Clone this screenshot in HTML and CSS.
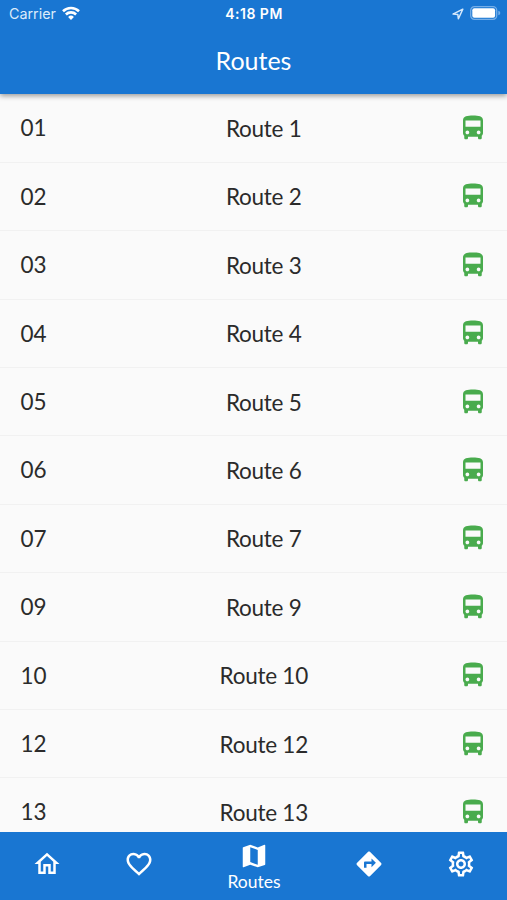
FILE: index.html
```html
<!DOCTYPE html>
<html lang="en">
<head>
<meta charset="utf-8">
<title>Routes</title>
<link rel="stylesheet" href="styles.css">
</head>
<body>
<svg class="defs" aria-hidden="true">
  <symbol id="bus" viewBox="0 0 24 24"><path d="M4 16c0 .88.39 1.67 1 2.22V20c0 .55.45 1 1 1h1c.55 0 1-.45 1-1v-1h8v1c0 .55.45 1 1 1h1c.55 0 1-.45 1-1v-1.780c.61-.55 1-1.340 1-2.220V6c0-3.500-3.580-4-8-4s-8 .5-8 4v10zm3.500 1c-.83 0-1.500-.67-1.500-1.500S6.670 14 7.500 14s1.500.67 1.500 1.500S8.330 17 7.500 17zm9 0c-.83 0-1.500-.67-1.500-1.500s.67-1.500 1.500-1.500 1.500.67 1.500 1.500-.67 1.500-1.500 1.500zm1.500-6H6V6h12v5z"/></symbol>
</svg>
<div class="app">
  <header class="top">
    <div class="status">
      <div class="carrier"><span>Carrier</span>
        <svg class="wifi" viewBox="0 0 18 14"><g fill="none" stroke="#fff" stroke-width="2.600"><path d="M1 5.200a11.500 11.500 0 0 1 16 0"/><path d="M3.900 8.500a7.300 7.300 0 0 1 10.200 0"/></g><path fill="#fff" d="M6.100 10.900a4.100 4.100 0 0 1 5.800 0L9 13.900z"/></svg>
      </div>
      <div class="clock">4:18 PM</div>
      <div class="power">
        <svg class="arrow" viewBox="0 0 12 12"><path d="M1 6.100L10.800 1.200 6.400 10.800 5.800 6.400z" fill="none" stroke="#d5e8fb" stroke-width="1.500" stroke-linejoin="round"/></svg>
        <svg class="battery" viewBox="0 0 31 14"><rect x=".7" y=".7" width="26" height="12.600" rx="3.700" fill="none" stroke="#75aee8" stroke-width="1.300"/><rect x="2.300" y="2.300" width="22.800" height="9.400" rx="2" fill="#fff"/><path d="M28.300 4.700q2 .6 2 2.300t-2 2.300z" fill="#75aee8"/></svg>
      </div>
    </div>
    <h1>Routes</h1>
  </header>
  <main class="list">
    <div class="row"><span>01</span><span class="name">Route 1</span><svg class="bus"><use href="#bus"/></svg></div>
    <div class="row"><span>02</span><span class="name">Route 2</span><svg class="bus"><use href="#bus"/></svg></div>
    <div class="row"><span>03</span><span class="name">Route 3</span><svg class="bus"><use href="#bus"/></svg></div>
    <div class="row"><span>04</span><span class="name">Route 4</span><svg class="bus"><use href="#bus"/></svg></div>
    <div class="row"><span>05</span><span class="name">Route 5</span><svg class="bus"><use href="#bus"/></svg></div>
    <div class="row"><span>06</span><span class="name">Route 6</span><svg class="bus"><use href="#bus"/></svg></div>
    <div class="row"><span>07</span><span class="name">Route 7</span><svg class="bus"><use href="#bus"/></svg></div>
    <div class="row"><span>09</span><span class="name">Route 9</span><svg class="bus"><use href="#bus"/></svg></div>
    <div class="row"><span>10</span><span class="name">Route 10</span><svg class="bus"><use href="#bus"/></svg></div>
    <div class="row"><span>12</span><span class="name">Route 12</span><svg class="bus"><use href="#bus"/></svg></div>
    <div class="row"><span>13</span><span class="name">Route 13</span><svg class="bus"><use href="#bus"/></svg></div>
  </main>
  <nav class="tabs">
    <a class="tab"><svg viewBox="0 0 24 24"><path d="M12 5.690l5 4.500V18h-2v-6H9v6H7v-7.810l5-4.500M12 3L2 12h3v8h6v-6h2v6h6v-8h3L12 3z"/></svg></a>
    <a class="tab"><svg viewBox="0 0 24 24"><path d="M16.500 3c-1.740 0-3.410.81-4.500 2.090C10.910 3.810 9.240 3 7.500 3 4.420 3 2 5.420 2 8.500c0 3.780 3.400 6.860 8.550 11.540L12 21.350l1.450-1.320C18.600 15.360 22 12.280 22 8.500 22 5.420 19.580 3 16.500 3zm-4.400 15.550l-.1.100-.1-.1C7.140 14.240 4 11.390 4 8.500 4 6.500 5.500 5 7.500 5c1.540 0 3.040.99 3.570 2.360h1.870C13.460 5.990 14.960 5 16.500 5c2 0 3.500 1.500 3.500 3.500 0 2.890-3.140 5.740-7.900 10.050z"/></svg></a>
    <a class="tab active"><svg viewBox="0 0 24 24"><path d="M20.500 3l-.16.030L15 5.100 9 3 3.360 4.900c-.21.070-.36.250-.36.480V20.500c0 .28.220.5.500.5l.16-.03L9 18.900l6 2.100 5.640-1.900c.21-.07.36-.25.36-.48V3.500c0-.28-.22-.5-.5-.5zM15 19l-6-2.110V5l6 2.110V19z"/></svg><span>Routes</span></a>
    <a class="tab"><svg viewBox="0 0 24 24"><path d="M21.710 11.290l-9-9c-.39-.39-1.020-.39-1.410 0l-9 9c-.39.390-.39 1.020 0 1.410l9 9c.39.390 1.020.390 1.410 0l9-9c.39-.38.390-1.010 0-1.410zM14 14.500V12h-4v3H8v-4c0-.55.450-1 1-1h5V7.500l3.500 3.500-3.500 3.500z"/></svg></a>
    <a class="tab"><svg viewBox="0 0 24 24"><path d="M19.430 12.980c.04-.32.070-.64.070-.98 0-.34-.03-.66-.07-.98l2.110-1.650c.19-.15.240-.42.120-.64l-2-3.460c-.09-.16-.26-.25-.44-.25-.06 0-.12.010-.17.030l-2.490 1c-.52-.4-1.080-.73-1.690-.98l-.38-2.650C14.460 2.180 14.250 2 14 2h-4c-.25 0-.46.180-.49.420l-.38 2.650c-.61.250-1.170.590-1.690.980l-2.490-1c-.06-.02-.12-.03-.18-.03-.17 0-.34.090-.43.250l-2 3.460c-.13.220-.07.490.12.640l2.110 1.650c-.04.320-.07.650-.07.980s.030.660.070.980l-2.110 1.650c-.19.150-.24.420-.12.640l2 3.460c.09.160.26.250.44.250.06 0 .12-.01.170-.03l2.490-1c.52.400 1.080.730 1.690.980l.38 2.650c.03.240.24.420.49.420h4c.25 0 .46-.18.490-.42l.38-2.650c.61-.25 1.170-.59 1.690-.98l2.490 1c.06.020.12.030.18.030.17 0 .34-.09.430-.25l2-3.460c.12-.22.070-.49-.12-.64l-2.110-1.650zm-1.980-1.710c.04.310.05.520.05.730 0 .21-.02.430-.05.730l-.14 1.130.89.700 1.080.840-.7 1.210-1.270-.51-1.040-.42-.9.680c-.43.320-.84.560-1.250.730l-1.060.430-.16 1.130-.2 1.350h-1.400l-.19-1.350-.16-1.130-1.060-.43c-.43-.18-.83-.41-1.230-.71l-.91-.7-1.060.430-1.270.510-.7-1.210 1.080-.84.890-.7-.14-1.130c-.03-.31-.05-.54-.05-.74s.020-.43.050-.73l.14-1.130-.89-.7-1.080-.84.700-1.210 1.270.510 1.040.420.900-.68c.43-.32.840-.56 1.250-.73l1.060-.43.160-1.130.2-1.350h1.390l.19 1.350.16 1.130 1.060.430c.43.180.83.410 1.230.710l.91.700 1.060-.43 1.270-.51.700 1.210-1.070.850-.89.700.14 1.130zM12 8c-2.210 0-4 1.790-4 4s1.790 4 4 4 4-1.790 4-4-1.790-4-4-4zm0 6c-1.100 0-2-.9-2-2s.9-2 2-2 2 .9 2 2-.9 2-2 2z"/></svg></a>
  </nav>
</div>
</body>
</html>
```
FILE: styles.css
```css
* { box-sizing: border-box; }
body { margin: 0; background: #fafafa; font-family: Lato, sans-serif; color: #2b2b2b; }
.defs { display: none; }
.app { display: flex; flex-direction: column; height: 900px; overflow: hidden; }
.top {
  position: relative;
  z-index: 1;
  flex: none;
  height: 94px;
  background: #1976d2;
  color: #fff;
  box-shadow: 0 2px 5px rgba(0, 0, 0, .38);
}
.status {
  display: grid;
  grid-template-columns: 1fr auto 1fr;
  align-items: center;
  height: 27px;
  padding: 0 6px 0 9px;
  font-family: Inter, sans-serif;
}
.carrier { display: flex; align-items: center; gap: 6px; font-size: 14.3px; color: #dcebfa; }
.wifi { width: 18px; height: 14px; position: relative; top: -1px; }
.clock { font-size: 14px; font-weight: 600; letter-spacing: .5px; margin-left: -2px; }
.power { display: flex; justify-content: flex-end; align-items: center; gap: 6px; }
.arrow { width: 12px; height: 12px; }
.battery { width: 31px; height: 14px; position: relative; top: -1px; }
h1 { margin: 0; height: 67px; line-height: 67px; text-align: center; font-size: 25px; font-weight: 400; }
.list { flex: 1; min-height: 0; overflow: hidden; padding-top: .4px; }
.row {
  display: grid;
  grid-template-columns: 80px 1fr 60px;
  align-items: center;
  height: 68.4px;
  padding: 0 19px 0 20.500px;
  border-bottom: 1px solid #f1f1f1;
  font-size: 22.500px;
}
.row > :first-child { padding-bottom: .4px; }
.name { text-align: center; font-size: 22.500px; letter-spacing: -.25px; padding-top: 1px; padding-right: 1px; }
.bus { width: 30px; height: 30px; fill: #49ab4d; justify-self: end; }
.tabs {
  flex: none;
  display: flex;
  height: 68px;
  padding-left: 1px;
  background: #1976d2;
  color: #fff;
}
.tab { flex: 92 1 0; display: flex; flex-direction: column; align-items: center; justify-content: center; padding-bottom: 4px; }
.tab svg { width: 30px; height: 30px; fill: #fff; }
.tab.active { flex-grow: 138; padding-top: 1px; padding-bottom: 0; }
.tab span { font-size: 17.500px; line-height: 21px; }
```
